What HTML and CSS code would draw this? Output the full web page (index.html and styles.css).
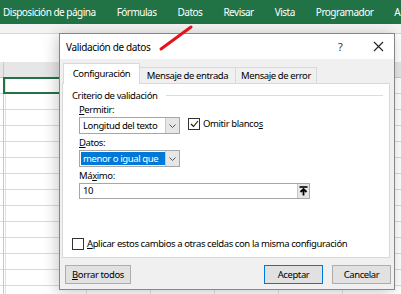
FILE: index.html
```html
<!DOCTYPE html>
<html lang="es">
<head>
    <meta charset="UTF-8">
    <meta name="viewport" content="width=device-width, initial-scale=1.0">
    <title>Validación de datos</title>
    <link rel="stylesheet" href="styles.css">
</head>
<body>

    <!-- Cinta de opciones -->
    <div class="ribbon">
        <span class="tab-link first">Disposición de página</span>
        <span class="tab-link">Fórmulas</span>
        <span class="tab-link">Datos</span>
        <span class="tab-link">Revisar</span>
        <span class="tab-link">Vista</span>
        <span class="tab-link">Programador</span>
        <span class="tab-link">A</span>
    </div>

    <!-- Hoja de calculo de fondo -->
    <div class="quick-bar"></div>
    <div class="formula-bar"></div>
    <div class="col-header"></div>
    <div class="grid">
        <div class="active-cell"></div>
    </div>

    <!-- Dialogo -->
    <div class="dialog">
        <div class="title-bar">
            <span class="title">Validación de datos</span>
            <span class="help">?</span>
            <svg class="close" width="11" height="11" viewBox="0 0 11 11">
                <path d="M1 1L10 10M10 1L1 10" stroke="#222" stroke-width="1.1" fill="none"/>
            </svg>
        </div>

        <div class="tabs">
            <div class="tab active">Configuración</div>
            <div class="tab entrada">Mensaje de entrada</div>
            <div class="tab error">Mensaje de error</div>
        </div>

        <div class="panel">
            <div class="legend">
                <span>Criterio de validación</span>
                <span class="legend-line"></span>
            </div>

            <div class="field">
                <div class="label"><u>P</u>ermitir:</div>
                <div class="row">
                    <div class="select">
                        <span class="select-text">Longitud del texto</span>
                        <span class="drop">
                            <svg width="7" height="4" viewBox="0 0 7 4"><path d="M0.5 0.5L3.5 3.5L6.5 0.5" stroke="#555" fill="none"/></svg>
                        </span>
                    </div>
                    <label class="check">
                        <span class="box">
                            <svg width="9" height="8" viewBox="0 0 9 8"><path d="M1 4L3.5 6.5L8 1" stroke="#111" stroke-width="1.1" fill="none"/></svg>
                        </span>
                        <span>Omitir blanco<u>s</u></span>
                    </label>
                </div>
            </div>

            <div class="field">
                <div class="label"><u>D</u>atos:</div>
                <div class="select">
                    <span class="select-text highlight">menor o igual que</span>
                    <span class="drop">
                        <svg width="7" height="4" viewBox="0 0 7 4"><path d="M0.5 0.5L3.5 3.5L6.5 0.5" stroke="#555" fill="none"/></svg>
                    </span>
                </div>
            </div>

            <div class="field">
                <div class="label">Má<u>x</u>imo:</div>
                <div class="input">
                    <span class="input-text">10</span>
                    <span class="ref-btn">
                        <svg width="9" height="10" viewBox="0 0 9 10"><path d="M0.5 1H8.5" stroke="#000" stroke-width="1.6"/><path d="M4.5 9.5V3.5M1.5 6L4.5 3L7.5 6" stroke="#000" stroke-width="1.8" fill="none"/></svg>
                    </span>
                </div>
            </div>

            <label class="check apply">
                <span class="box"></span>
                <span><u>A</u>plicar estos cambios a otras celdas con la misma configuración</span>
            </label>
        </div>

        <div class="footer">
            <button class="btn"><u>B</u>orrar todos</button>
            <span class="spacer"></span>
            <button class="btn primary">Aceptar</button>
            <button class="btn">Cancelar</button>
        </div>
    </div>

    <!-- Marca roja -->
    <svg class="mark" width="401" height="294" viewBox="0 0 401 294">
        <path d="M161 49L191 27" stroke="#e3141d" stroke-width="3" stroke-linecap="round"/>
    </svg>

</body>
</html>
```

FILE: styles.css
```css
body {
    margin: 0;
    width: 401px;
    height: 294px;
    overflow: hidden;
    position: relative;
    font-family: "Noto Sans", "Open Sans", sans-serif;
    font-size: 9.5px;
    letter-spacing: -0.4px;
    color: #000;
    background-color: #fff;
}

u {
    text-decoration: underline;
    text-underline-offset: 1px;
}

/* Cinta */
.ribbon {
    height: 24px;
    background-color: #217346;
    color: #fff;
    display: flex;
    align-items: center;
    font-size: 10px;
    letter-spacing: -0.5px;
    white-space: nowrap;
    overflow: hidden;
}

.tab-link {
    margin-left: 21px;
    flex: none;
}

.tab-link.first {
    margin-left: 3px;
}

/* Hoja */
.quick-bar {
    height: 9px;
    background-color: #f3f3f3;
    border-bottom: 1px solid #d6d6d6;
}

.formula-bar {
    height: 28px;
    background-color: #fff;
}

.col-header {
    height: 15px;
    background-color: #e6e6e6;
    border-bottom: 1px solid #c8c8c8;
    background-image: linear-gradient(#c8c8c8, #c8c8c8);
    background-size: 1px 100%;
    background-position: 3px 0;
    background-repeat: no-repeat;
}

.grid {
    height: 220px;
    background-image:
        repeating-linear-gradient(to bottom, transparent 0 15px, #dadada 15px 16px),
        repeating-linear-gradient(to right, transparent 0 63px, #e2e2e2 63px 64px);
    background-position: 0 0, 23px 0;
    position: relative;
}

.grid::before {
    content: "";
    display: block;
    position: absolute;
    left: 3px;
    top: 0;
    bottom: 0;
    width: 1px;
    background-color: #c8c8c8;
}

.active-cell {
    margin-left: 3px;
    width: 80px;
    height: 13px;
    border: 2px solid #217346;
    position: relative;
    top: -1px;
}

/* Dialogo */
.dialog {
    position: absolute;
    left: 59px;
    top: 33px;
    width: 334px;
    height: 255px;
    border: 1px solid #868686;
    background-color: #f0f0f0;
    box-shadow: -2px 2px 14px rgba(0, 0, 0, 0.22);
    display: flex;
    flex-direction: column;
}

.title-bar {
    height: 25px;
    background-color: #fff;
    display: flex;
    align-items: center;
    padding-left: 6px;
}

.title {
    flex: 1;
    font-size: 10px;
    letter-spacing: -0.35px;
}

.help {
    width: 12px;
    margin-right: 23px;
    font-size: 11px;
    color: #333;
}

.close {
    margin-right: 10px;
}

.tabs {
    display: flex;
    align-items: flex-end;
    padding-left: 3px;
    height: 24px;
}

.tab {
    height: 15px;
    line-height: 15px;
    border: 1px solid #d9d9d9;
    border-bottom: none;
    border-left: none;
    background-color: #f0f0f0;
    text-align: center;
    white-space: nowrap;
}

.tab.active {
    width: 75px;
    height: 20px;
    line-height: 20px;
    background-color: #fff;
    border-left: 1px solid #d9d9d9;
    position: relative;
    top: 1px;
    z-index: 1;
}

.tab.entrada {
    width: 95px;
}

.tab.error {
    width: 80px;
}

.panel {
    margin-left: 2px;
    width: 328px;
    height: 175px;
    box-sizing: border-box;
    background-color: #fff;
    border: 1px solid #d9d9d9;
    padding: 5px 6px 0 9px;
    display: flex;
    flex-direction: column;
}

.legend {
    display: flex;
    align-items: center;
    height: 12px;
    white-space: nowrap;
}

.legend-line {
    flex: 1;
    margin-left: 8px;
    height: 1px;
    background-color: #dcdcdc;
}

.field {
    margin-left: 7px;
}

.label {
    height: 12px;
    line-height: 12px;
    margin-top: 3px;
    margin-bottom: 1px;
}

.row {
    display: flex;
    align-items: flex-start;
}

.select {
    width: 99px;
    height: 15px;
    border: 1px solid #a6a6a6;
    display: flex;
    align-items: stretch;
    background-color: #fff;
}

.select-text {
    flex: 1;
    line-height: 15px;
    padding-left: 3px;
    white-space: nowrap;
    overflow: hidden;
}

.select-text.highlight {
    margin: 1px 0 1px 1px;
    line-height: 13px;
    padding-left: 2px;
    background-color: #0078d7;
    color: #fff;
}

.drop {
    width: 13px;
    background-color: #e6e6e6;
    border-left: 1px solid #c8c8c8;
    display: flex;
    align-items: center;
    justify-content: center;
}

.check {
    display: flex;
    align-items: center;
    margin-left: 8px;
    height: 13px;
    white-space: nowrap;
}

.box {
    width: 10px;
    height: 10px;
    border: 1px solid #333;
    margin-right: 3px;
    display: flex;
    align-items: center;
    justify-content: center;
    background-color: #fff;
}

.input {
    width: 229px;
    height: 14px;
    border: 1px solid #a6a6a6;
    display: flex;
}

.input-text {
    flex: 1;
    line-height: 14px;
    padding-left: 3px;
}

.ref-btn {
    width: 11px;
    background-color: #e6e6e6;
    border-left: 1px solid #c8c8c8;
    display: flex;
    align-items: center;
    justify-content: center;
}

.check.apply {
    margin-left: 0;
    margin-top: 38px;
}

.footer {
    display: flex;
    margin: 7px 3px 0 5px;
}

.spacer {
    flex: 1;
}

.btn {
    height: 19px;
    padding: 0;
    border: 1px solid #adadad;
    background-color: #e1e1e1;
    font-family: inherit;
    font-size: 9.5px;
    letter-spacing: -0.4px;
    color: #000;
    width: 66px;
}

.btn.primary {
    width: 59px;
    border-color: #0078d7;
    margin-right: 9px;
}

.btn + .btn {
    width: 59px;
}

.mark {
    position: absolute;
    left: 0;
    top: 0;
    pointer-events: none;
}
```
